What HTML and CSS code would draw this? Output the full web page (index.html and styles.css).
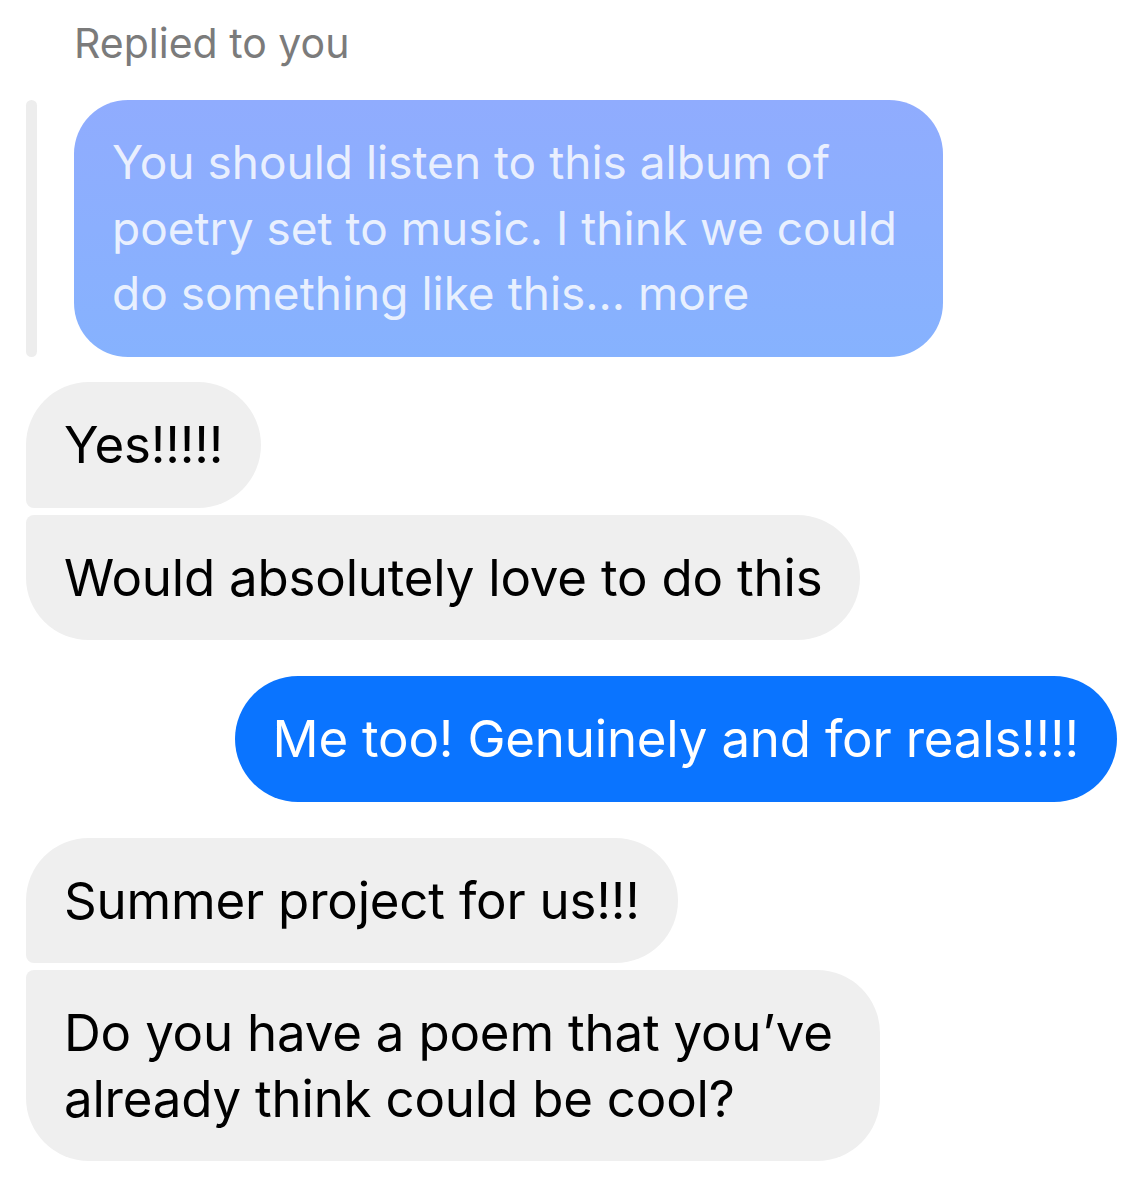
FILE: index.html
```html
<!DOCTYPE html>
<html lang="en">
<head>
<meta charset="utf-8">
<title>Messages</title>
<link rel="stylesheet" href="styles.css">
</head>
<body>
<main class="thread">
  <div class="reply-label">Replied to you</div>
  <div class="quote">
    <div class="quote-bar"></div>
    <div class="bubble bubble-quoted">You should listen to this album of<br>poetry set to music. I think we could<br>do something like this... more</div>
  </div>

  <div class="group group-in group-first">
    <div class="bubble bubble-in tail-first">Yes!!!!!</div>
    <div class="bubble bubble-in tail-last">Would absolutely love to do this</div>
  </div>

  <div class="group group-out">
    <div class="bubble bubble-out">Me too! Genuinely and for reals!!!!</div>
  </div>

  <div class="group group-in">
    <div class="bubble bubble-in tail-first">Summer project for us!!!</div>
    <div class="bubble bubble-in tail-last">Do you have a poem that you’ve already think could be cool?</div>
  </div>
</main>
</body>
</html>
```

FILE: styles.css
```css
html, body {
  margin: 0;
  padding: 0;
  background: #ffffff;
}

body {
  font-family: Inter, "Liberation Sans", Arial, sans-serif;
  -webkit-font-smoothing: antialiased;
}

.thread {
  display: flex;
  flex-direction: column;
  padding: 14px 25px 0 26px;
}

.reply-label {
  font-size: 41px;
  line-height: 58px;
  color: #7b7b7b;
  padding-left: 48px;
  margin-bottom: 28px;
}

.quote {
  display: flex;
  align-items: stretch;
  gap: 37px;
}

.quote-bar {
  width: 11px;
  border-radius: 6px;
  background: #ededed;
  flex: none;
}

.bubble {
  font-size: 51px;
  line-height: 65.5px;
  letter-spacing: -0.2px;
  padding: 30px 38px;
  box-sizing: border-box;
  border-radius: 63px;
  max-width: 854px;
}

.bubble-quoted {
  width: 869px;
  max-width: 869px;
  font-size: 46px;
  line-height: 65.7px;
  letter-spacing: 0;
  white-space: nowrap;
  border-radius: 54px;
  color: rgba(255, 255, 255, 0.82);
  background: linear-gradient(180deg, #90acfe 0%, #86b2fe 100%);
}

.group {
  display: flex;
  flex-direction: column;
  gap: 7px;
  margin-top: 36px;
}

.group-first {
  margin-top: 25px;
}

.group-in {
  align-items: flex-start;
}

.group-out {
  align-items: flex-end;
}

.bubble-in {
  background: #efefef;
  color: #000000;
}

.bubble-out {
  max-width: none;
  background: #0a74ff;
  color: #ffffff;
}

.tail-first {
  border-bottom-left-radius: 8px;
}

.tail-last {
  border-top-left-radius: 8px;
}
```
